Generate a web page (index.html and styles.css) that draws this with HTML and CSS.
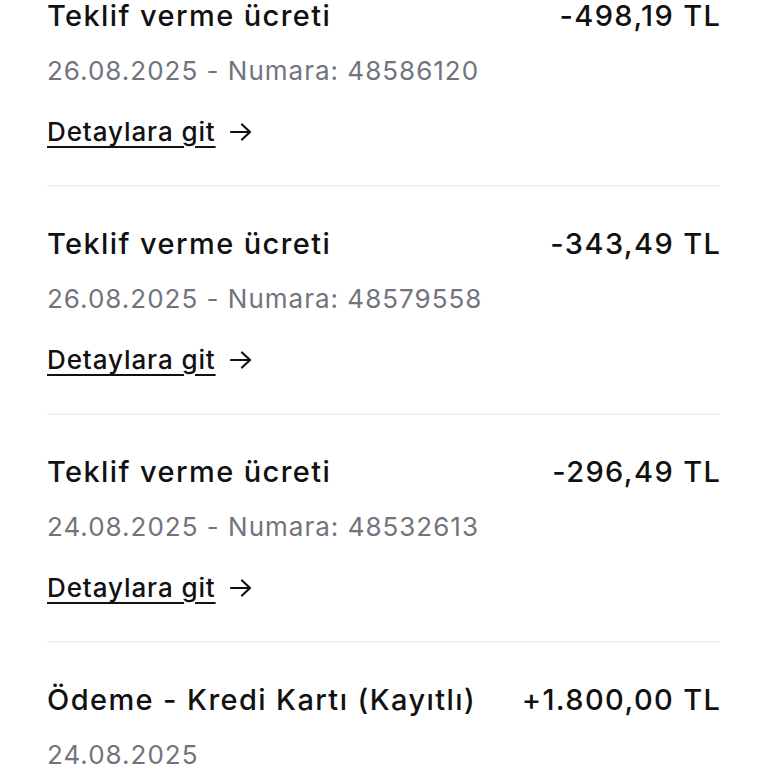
FILE: index.html
```html
<!DOCTYPE html>
<html lang="tr">
<head>
<meta charset="utf-8">
<link rel="stylesheet" href="styles.css">
</head>
<body>
<div class="list">
  <div class="item">
    <div class="row"><span class="title">Teklif verme ücreti</span><span class="amount">-498,19 TL</span></div>
    <div class="sub">26.08.2025 - Numara: 48586120</div>
    <a class="link" href="#"><span class="lt">Detaylara git</span><svg class="arrow" viewBox="0 0 22 18" width="22" height="18"><path d="M1 9H20M12 1.5L20 9L12 16.5" fill="none" stroke="#111" stroke-width="2.2" stroke-linecap="round" stroke-linejoin="round"/></svg></a>
  </div>
  <div class="item">
    <div class="row"><span class="title">Teklif verme ücreti</span><span class="amount">-343,49 TL</span></div>
    <div class="sub">26.08.2025 - Numara: 48579558</div>
    <a class="link" href="#"><span class="lt">Detaylara git</span><svg class="arrow" viewBox="0 0 22 18" width="22" height="18"><path d="M1 9H20M12 1.5L20 9L12 16.5" fill="none" stroke="#111" stroke-width="2.2" stroke-linecap="round" stroke-linejoin="round"/></svg></a>
  </div>
  <div class="item">
    <div class="row"><span class="title">Teklif verme ücreti</span><span class="amount">-296,49 TL</span></div>
    <div class="sub">24.08.2025 - Numara: 48532613</div>
    <a class="link" href="#"><span class="lt">Detaylara git</span><svg class="arrow" viewBox="0 0 22 18" width="22" height="18"><path d="M1 9H20M12 1.5L20 9L12 16.5" fill="none" stroke="#111" stroke-width="2.2" stroke-linecap="round" stroke-linejoin="round"/></svg></a>
  </div>
  <div class="item">
    <div class="row"><span class="title">Ödeme - Kredi Kartı (Kayıtlı)</span><span class="amount">+1.800,00 TL</span></div>
    <div class="sub">24.08.2025</div>
  </div>
</div>
</body>
</html>
```
FILE: styles.css
```css
html, body {
  margin: 0;
  padding: 0;
  background: #ffffff;
}
body {
  font-family: "Inter", "Noto Sans", sans-serif;
  color: #111111;
  overflow: hidden;
  height: 768px;
}
.list {
  padding: 0 48px 0 47px;
}
.item {
  padding: 41px 0 37px;
  border-bottom: 2px solid #f1f1f2;
}
.item:first-child {
  padding-top: 0;
}
.row {
  display: flex;
  justify-content: space-between;
  align-items: center;
  height: 32px;
}
.title {
  font-size: 29px;
  font-weight: 500;
  line-height: 32px;
  letter-spacing: 1.4px;
}
.amount {
  font-size: 29px;
  font-weight: 500;
  line-height: 32px;
  letter-spacing: 1.4px;
  margin-right: -1.4px;
}
.sub {
  margin-top: 23px;
  font-size: 26px;
  line-height: 32px;
  letter-spacing: 1px;
  color: #70757d;
}
.link {
  margin-top: 29px;
  display: flex;
  align-items: center;
  gap: 14px;
  height: 32px;
  color: #111111;
  text-decoration: none;
}
.lt {
  font-size: 26px;
  font-weight: 500;
  line-height: 32px;
  letter-spacing: 0.9px;
  text-decoration: underline;
  text-decoration-thickness: 2px;
  text-underline-offset: 5px;
}
.arrow {
  display: block;
}
```
